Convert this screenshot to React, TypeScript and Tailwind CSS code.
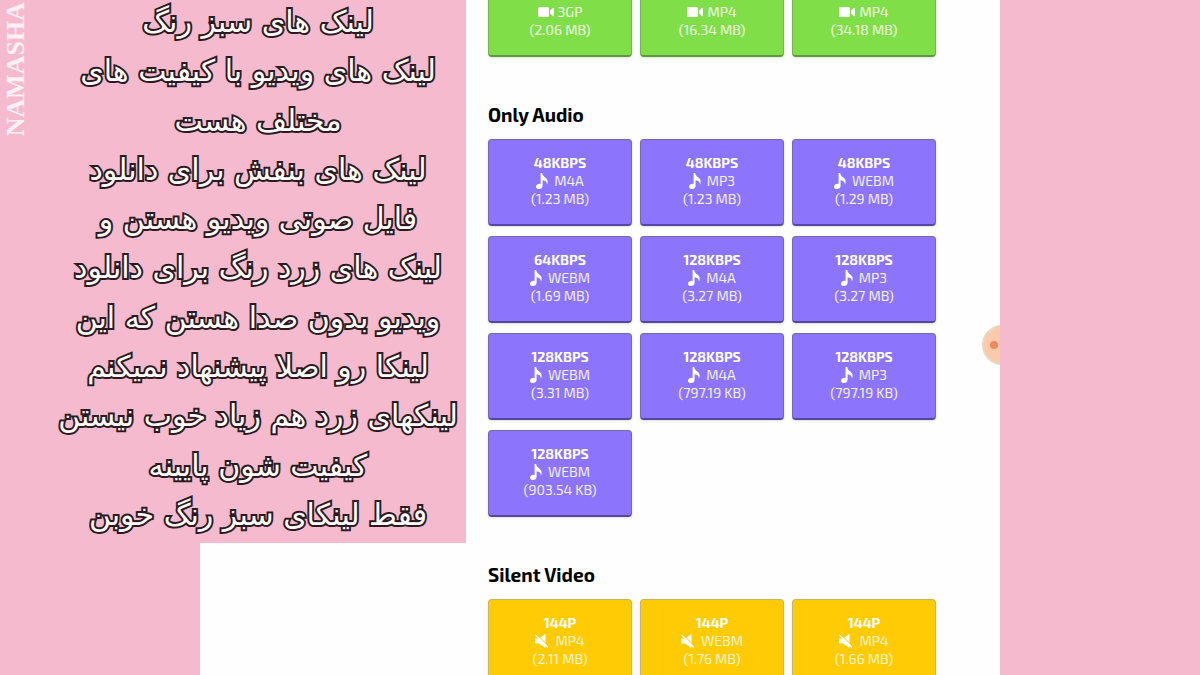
import React from "react";

type Kind = "video" | "audio" | "silent";

type Download = {
    quality?: string;
    format: string;
    size: string;
};

const noteLines = [
    "لینک های سبز رنگ",
    "لینک های ویدیو با کیفیت های",
    "مختلف هست",
    "لینک های بنفش برای دانلود",
    "فایل صوتی ویدیو هستن و",
    "لینک های زرد رنگ برای دانلود",
    "ویدیو بدون صدا هستن که این",
    "لینکا رو اصلا پیشنهاد نمیکنم",
    "لینکهای زرد هم زیاد خوب نیستن",
    "کیفیت شون پایینه",
    "فقط لینکای سبز رنگ خوبن"
];

const videos: Download[] = [
    { format: "3GP", size: "2.06 MB" },
    { format: "MP4", size: "16.34 MB" },
    { format: "MP4", size: "34.18 MB" }
];

const audios: Download[] = [
    { quality: "48KBPS", format: "M4A", size: "1.23 MB" },
    { quality: "48KBPS", format: "MP3", size: "1.23 MB" },
    { quality: "48KBPS", format: "WEBM", size: "1.29 MB" },
    { quality: "64KBPS", format: "WEBM", size: "1.69 MB" },
    { quality: "128KBPS", format: "M4A", size: "3.27 MB" },
    { quality: "128KBPS", format: "MP3", size: "3.27 MB" },
    { quality: "128KBPS", format: "WEBM", size: "3.31 MB" },
    { quality: "128KBPS", format: "M4A", size: "797.19 KB" },
    { quality: "128KBPS", format: "MP3", size: "797.19 KB" },
    { quality: "128KBPS", format: "WEBM", size: "903.54 KB" }
];

const silents: Download[] = [
    { quality: "144P", format: "MP4", size: "2.11 MB" },
    { quality: "144P", format: "WEBM", size: "1.76 MB" },
    { quality: "144P", format: "MP4", size: "1.66 MB" }
];

const tileColors: Record<Kind, string> = {
    video: "bg-[#80df48] border-[#78b455] border-b-[#5c9a3c] text-white/90",
    audio: "bg-[#8c75fc] border-[#7368ac] border-b-[#5547a0] text-white/90",
    silent: "bg-[#fecb05] border-[#cdb566] border-b-[#b8962a] text-white/80"
};

const KindIcon = ({ kind }: { kind: Kind }) => {
    if (kind === "video") {
        return (
            <svg viewBox="0 0 16 10" className="w-4 h-[10px] fill-white" aria-hidden="true">
                <path d="M1.5 0h8A1.5 1.5 0 0 1 11 1.5v7A1.5 1.5 0 0 1 9.5 10h-8A1.5 1.5 0 0 1 0 8.5v-7A1.5 1.5 0 0 1 1.5 0zM12 3.4 15 .8c.4-.3 1 0 1 .5v7.4c0 .5-.6.8-1 .5l-3-2.6z" />
            </svg>
        );
    }
    if (kind === "audio") {
        return (
            <svg viewBox="0 0 12 16" className="w-3 h-4 fill-white" aria-hidden="true">
                <path d="M4.6 0h1.6c.3 2.2 1.3 3.2 3.1 4.6 2.7 2.2 2.9 4.3 1.6 7.2.1-2.7-1.4-4.2-4.3-4.5v5.4C6.6 14.7 5 16 3 16c-1.700 0-3-.9-3-2.300 0-1.700 1.700-3 3.500-3 .4 0 .8.1 1.100.2z" />
            </svg>
        );
    }
    return (
        <svg viewBox="0 0 14 14" className="w-[14px] h-[14px]" aria-hidden="true">
            <path className="fill-white" d="M0 4.500h4L10.500 0v14L4 9.500H0z" />
            <path className="stroke-white" strokeWidth="1.5" d="M.5 1 13 13.4" />
            <path className="stroke-[#fecb05]" strokeWidth="1" d="M1.6.4 14 12.4" />
        </svg>
    );
};

const DownloadGrid = ({ items, kind }: { items: Download[]; kind: Kind }) => (
    <div className="grid grid-cols-3 gap-x-2 gap-y-[10px]">
        {items.map((item, index) => (
            <a
                key={index}
                href="#download"
                className={`flex flex-col items-center justify-end h-[87px] pb-4 rounded border border-b-2 shadow text-sm leading-[18px] font-normal ${tileColors[kind]}`}
            >
                {item.quality && <span className="font-bold text-white">{item.quality}</span>}
                <span className={kind === "video" ? "flex items-center gap-1" : "flex items-center gap-[6px]"}>
                    <KindIcon kind={kind} />
                    {item.format}
                </span>
                <span>({item.size})</span>
            </a>
        ))}
    </div>
);

const Section = ({ title, items, kind }: { title: string; items: Download[]; kind: Kind }) => (
    <section className="mt-12">
        <h2 className="mb-[14px] text-[19px] leading-5 font-bold text-black">{title}</h2>
        <DownloadGrid items={items} kind={kind} />
    </section>
);

const App = () => {
    return (
        <div className="relative flex justify-center h-screen overflow-hidden bg-[#f6bacf]">
            <main className="relative w-2/3 pl-72 pr-16 overflow-hidden bg-[#fefefe] font-['Exo_2','Roboto',sans-serif]">
                <div className="-mt-[30px]">
                    <DownloadGrid items={videos} kind="video" />
                </div>
                <Section title="Only Audio" items={audios} kind="audio" />
                <Section title="Silent Video" items={silents} kind="silent" />

                {/* floating assistant button, half hidden behind the edge */}
                <button
                    type="button"
                    aria-label="Assistant"
                    className="absolute -right-[22px] top-[325px] flex items-center w-10 h-10 pl-[6px] rounded-full border-2 border-[#e8d8c6] bg-[#fcc9ab]"
                >
                    <span className="w-2 h-2 rounded-full bg-[#ee8a62]" />
                </button>
            </main>

            <aside className="absolute left-0 top-0 w-[466px] h-[543px] bg-[#f6bacf]">
                <div className="absolute left-0 top-[2px] rotate-180 [writing-mode:vertical-rl] font-['Liberation_Serif',serif] font-bold text-[26px] leading-[32px] text-white/80">
                    NAMASHA
                </div>
                <div
                    dir="rtl"
                    lang="fa"
                    className="flex flex-col justify-between h-full pl-[50px] pb-[6px] text-center whitespace-nowrap font-['DejaVu_Sans',sans-serif] text-[30px] leading-[44px] text-white [-webkit-text-stroke:4px_#2b1a22] [paint-order:stroke_fill]"
                >
                    {noteLines.map((line) => (
                        <p key={line}>{line}</p>
                    ))}
                </div>
            </aside>
        </div>
    );
};

export default App;
